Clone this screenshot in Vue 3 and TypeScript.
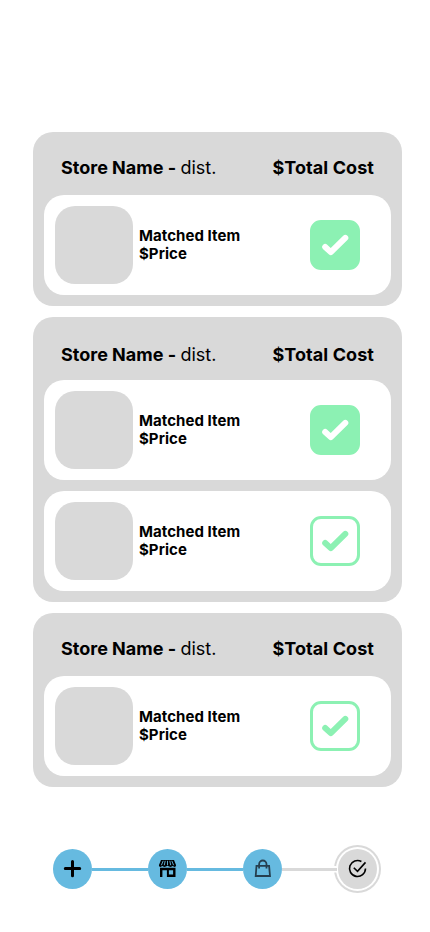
<script setup lang="ts">
interface Item {
  name: string
  price: string
  checked: boolean
}
interface Store {
  name: string
  distance: string
  total: string
  lowered?: boolean
  items: Item[]
}

const item = (checked: boolean): Item => ({ name: 'Matched Item', price: '$Price', checked })
const store = (items: Item[], lowered = false): Store => ({
  name: 'Store Name',
  distance: 'dist.',
  total: '$Total Cost',
  lowered,
  items,
})

const stores: Store[] = [
  store([item(true)]),
  store([item(true), item(false)], true),
  store([item(false)]),
]
</script>

<template>
  <main class="screen">
    <section class="stores">
      <article v-for="(s, i) in stores" :key="i" class="store">
        <header class="store-head" :class="{ lowered: s.lowered }">
          <span class="store-name"><b>{{ s.name }} - </b>{{ s.distance }}</span>
          <b class="total">{{ s.total }}</b>
        </header>
        <div class="items">
          <div v-for="(it, j) in s.items" :key="j" class="item">
            <div class="thumb"></div>
            <div class="info">
              <span>{{ it.name }}</span>
              <span>{{ it.price }}</span>
            </div>
            <div class="check" :class="{ filled: it.checked }">
              <svg viewBox="3 3 44 44" width="44" height="44">
                <path d="M15.2 27L20.8 32.1L35.3 17.9" />
              </svg>
            </div>
          </div>
        </div>
      </article>
    </section>

    <nav class="steps">
      <div class="step">
        <svg viewBox="0.5 0 39 40" width="39" height="40">
          <path d="M20 12.4V26.8M12.8 19.6H27.2" fill="none" stroke="#000" stroke-width="3" stroke-linecap="round" />
        </svg>
      </div>
      <div class="line"></div>
      <div class="step">
        <svg viewBox="0.5 0 39 40" width="39" height="40">
          <path d="M13.5 11H26.5L28.6 16.3Q28.6 18 27 18L25.2 17L23.2 18L21.6 17.6L20 16.8L18.4 17.6L16.8 18L14.8 17L13 18Q11.4 18 11.4 16.3Z" />
          <path d="M15.7 11.8L13.9 16.2M17.7 11.8L16.8 16.2M20 11.8V16.2M22.3 11.8L23.2 16.2M24.3 11.8L26.1 16.2" fill="none" stroke="#66bae0" stroke-width="0.9" />
          <path fill-rule="evenodd" d="M12.5 18.7H28V28H19.4V21.3H14.9V28H12.5ZM21.4 21.2V25.6H25.6V21.2Z" />
        </svg>
      </div>
      <div class="line"></div>
      <div class="step">
        <svg viewBox="0.5 0 39 40" width="39" height="40">
          <path d="M14 16.8H26.6L27.5 27H13.2ZM16.6 19.5V15.2A3.7 3.7 0 0 1 24 15.2V19.5" fill="none" stroke="#263f4f" stroke-width="1.8" />
        </svg>
      </div>
      <div class="line pending"></div>
      <div class="step current">
        <svg viewBox="0.5 0 39 40" width="39" height="40">
          <path d="M23.9 12.5A8 8 0 1 0 28 19.6M16.3 18.8L20 22.4L28 13.4" fill="none" stroke="#000" stroke-width="1.6" />
        </svg>
      </div>
    </nav>
  </main>
</template>

<style>
body {
  background: #fff;
}
</style>

<style scoped>
.screen {
  box-sizing: border-box;
  width: 430px;
  height: 932px;
  padding: 132px 28px 0 33px;
  overflow: hidden;
  color: #000;
  font-family: Inter, sans-serif;
}
.stores {
  display: flex;
  flex-direction: column;
  gap: 11px;
}
.store {
  padding: 0 11px 11px;
  border-radius: 20px;
  background: #d9d9d9;
}
.store-head {
  box-sizing: border-box;
  display: flex;
  justify-content: space-between;
  height: 63px;
  padding: 25px 17px 0;
  font-size: 18px;
  line-height: 22px;
}
.store-head.lowered {
  padding-top: 27px;
}
b {
  font-weight: 700;
}
.total {
  letter-spacing: 0.08px;
}
.items {
  display: flex;
  flex-direction: column;
  gap: 11px;
}
.item {
  box-sizing: border-box;
  display: flex;
  align-items: center;
  height: 100px;
  padding: 0 31px 0 11px;
  border-radius: 20px;
  background: #fff;
}
.thumb {
  width: 78px;
  height: 78px;
  border-radius: 20px;
  background: #d9d9d9;
}
.info {
  display: flex;
  flex: 1;
  flex-direction: column;
  margin-left: 6px;
  font-size: 15px;
  font-weight: 700;
  line-height: 18px;
  letter-spacing: 0.05px;
}
.check {
  box-sizing: border-box;
  display: grid;
  place-items: center;
  width: 50px;
  height: 50px;
  border: 3px solid #8cf1b3;
  border-radius: 11px;
}
.check path {
  fill: none;
  stroke: #8cf1b3;
  stroke-width: 6;
  stroke-linecap: round;
  stroke-linejoin: round;
}
.check.filled {
  background: #8cf1b3;
}
.check.filled path {
  stroke: #fff;
}
.steps {
  display: flex;
  align-items: center;
  margin: 62px 0 0 20px;
}
.step {
  display: grid;
  flex: none;
  place-items: center;
  width: 39px;
  height: 40px;
  border-radius: 50%;
  background: #66bae0;
}
.line {
  flex: none;
  width: 56px;
  height: 3px;
  background: #66bae0;
}
.line.pending {
  position: relative;
  z-index: 1;
  width: 55px;
  margin-right: 1px;
  background: #d9d9d9;
  box-shadow: 0 0 0 2px #fff;
  clip-path: inset(-2px 0 -2px 0);
}
.step.current {
  background: #d9d9d9;
  box-shadow: 0 0 0 2px #fff, 0 0 0 4px #d9d9d9;
}
</style>
